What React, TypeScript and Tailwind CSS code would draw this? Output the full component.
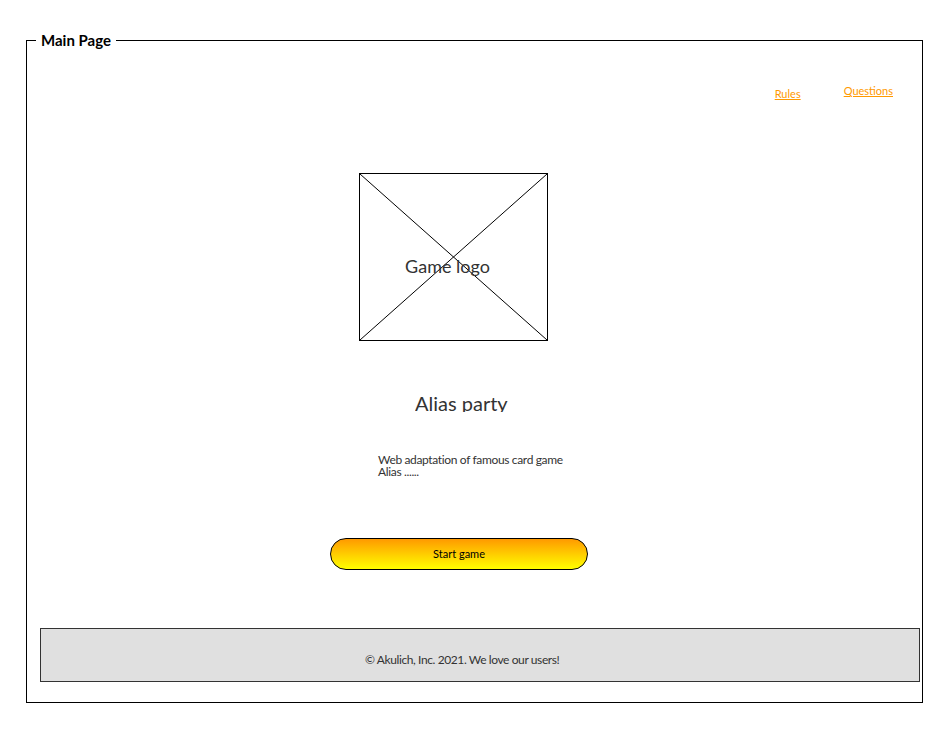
import React from 'react';

const font = { fontFamily: 'Lato, "Noto Sans", sans-serif' };

function LogoPlaceholder() {
  return (
    <div className="relative ml-[332px] mt-[72px] flex h-[168px] w-[189px] items-center justify-center border border-black">
      <svg className="absolute inset-0 h-full w-full" viewBox="0 0 187 166" preserveAspectRatio="none">
        <line x1="0" y1="0" x2="187" y2="166" stroke="#000" strokeWidth="1" />
        <line x1="187" y1="0" x2="0" y2="166" stroke="#000" strokeWidth="1" />
      </svg>
      <span className="relative ml-[-12px] mt-[17px] text-[18px] leading-[22px] text-[#333]">Game logo</span>
    </div>
  );
}

export default function App() {
  return (
    <div className="min-h-[730px] w-[933px] bg-white" style={{ fontFamily: '"Source Sans Pro", Lato, sans-serif' }}>
      <fieldset className="ml-[26px] mt-[30px] h-[673px] w-[897px] border border-black" style={font}>
        <legend className="ml-[9px] px-[5px] text-[15px] font-bold leading-[20px] text-black">Main Page</legend>

        <div className="mt-[34px] flex items-start justify-end pr-[29px] text-[11px] leading-[14px]">
          <a href="#" className="mt-[3px] text-[#ff9900] underline">
            Rules
          </a>
          <a href="#" className="ml-[43px] text-[#ff9900] underline">
            Questions
          </a>
        </div>

        <LogoPlaceholder />

        {/* title is clipped in the mockup */}
        <div className="ml-[388px] mt-[50px] h-[21px] overflow-hidden">
          <h1 className="text-[20px] leading-[24px] text-[#333]">Alias party</h1>
        </div>

        <p className="ml-[351px] mt-[42px] w-[200px] text-[12px] leading-[12px] tracking-[-0.35px] text-[#333]">
          Web adaptation of famous card game Alias ......
        </p>

        <button className="ml-[303px] mt-[60px] h-[32px] w-[258px] rounded-full border border-black bg-gradient-to-b from-[#ff9900] to-[#ffff00] text-[11px] text-black">
          Start game
        </button>

        <footer className="ml-[13px] mt-[58px] h-[54px] w-[880px] border border-[#333] bg-[#e0e0e0] pl-[324px] pt-[24px] text-[12px] leading-[14px] tracking-[-0.4px] text-[#333]">
          © Akulich, Inc. 2021. We love our users!
        </footer>
      </fieldset>
    </div>
  );
}
